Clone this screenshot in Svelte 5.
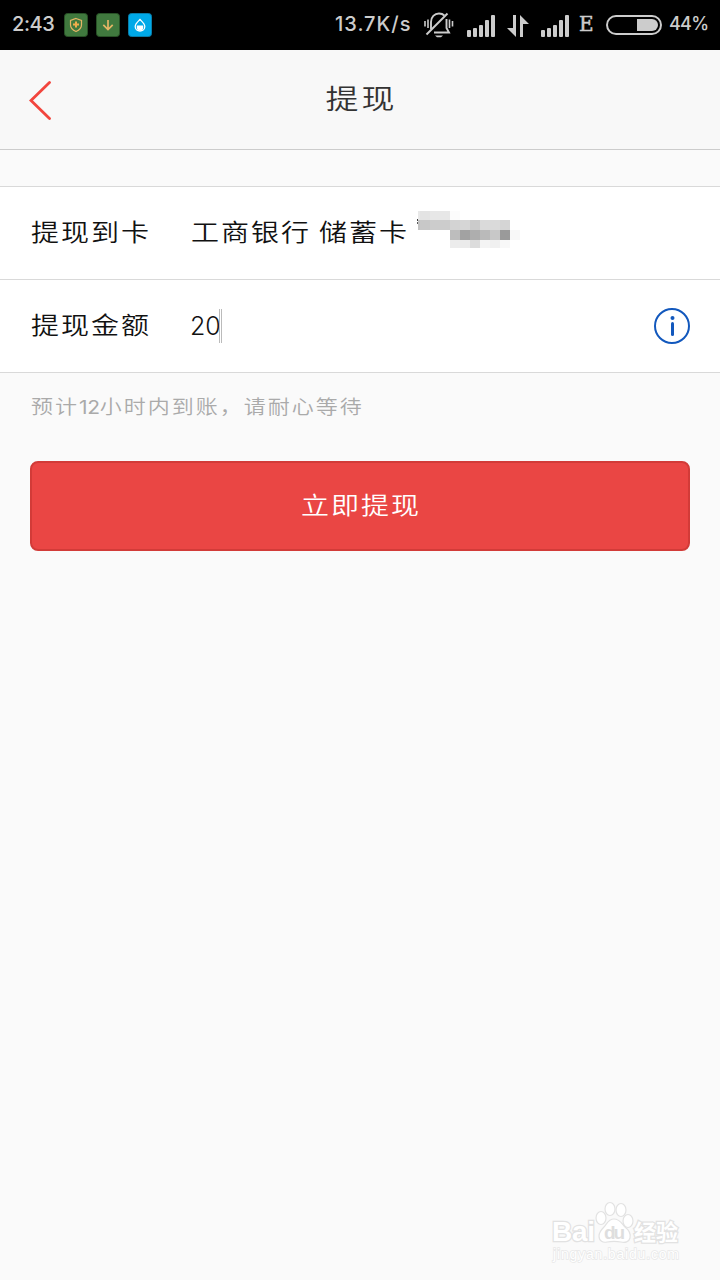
<script lang="ts">
  let amount = $state('20');

  const bars = [7, 9, 12, 17, 22];

  // blocks hiding the card number: x, y, width, height, grey level
  const mosaic = [
    [1, 0, 2, 9, 232], [3, 0, 10, 9, 227], [13, 0, 20, 9, 231], [33, 0, 10, 9, 252],
    [1, 9, 2, 10, 194], [3, 9, 10, 10, 200], [13, 9, 20, 10, 204], [33, 9, 10, 10, 211],
    [43, 9, 10, 10, 214], [53, 9, 10, 10, 203], [63, 9, 20, 10, 218], [83, 9, 10, 10, 213],
    [33, 19, 10, 10, 189], [43, 19, 10, 10, 162], [53, 19, 10, 10, 174], [63, 19, 10, 10, 186],
    [73, 19, 10, 10, 200], [83, 19, 10, 10, 154], [93, 19, 10, 10, 248],
    [33, 29, 10, 8, 236], [43, 29, 10, 8, 235], [53, 29, 10, 8, 220], [63, 29, 10, 8, 244],
    [73, 29, 10, 8, 240], [83, 29, 10, 8, 248],
    [0, 8, 1, 2, 60], [0, 11, 1, 2, 90]
  ];
</script>

{#snippet signal()}
  <svg class="signal" width="28" height="22" viewBox="0 0 28 22">
    {#each bars as h, i (i)}
      <rect x={i * 6} y={22 - h} width="4" height={h} rx="1" fill="#ccc" />
    {/each}
  </svg>
{/snippet}

<div class="screen">
  <div class="status">
    <span class="clock">2:43</span>
    <svg class="app" width="24" height="24" viewBox="0 0 24 24" fill="none">
      <rect x=".5" y=".5" width="23" height="23" rx="3" fill="#40793e" stroke="#285126" />
      <path d="M12 5.500 17.500 7.500V12c0 3.200-2.500 5.200-5.500 6.500C9 17.200 6.500 15.200 6.500 12V7.500Z" stroke="#e5b566" stroke-width="1.200" />
      <path d="M12 8.500v6M9 11.500h6" stroke="#f0ad4b" stroke-width="2" />
    </svg>
    <svg class="app" width="24" height="24" viewBox="0 0 24 24" fill="none">
      <rect x=".5" y=".5" width="23" height="23" rx="3" fill="#40793e" stroke="#285126" />
      <path d="M12 7v9.500M7.300 11.800 12 16.500l4.700-4.700" stroke="#e5b566" stroke-width="1.700" />
    </svg>
    <svg class="app" width="24" height="24" viewBox="0 0 24 24" fill="none">
      <rect x=".5" y=".5" width="23" height="23" rx="3" fill="#00a9e8" stroke="#087da9" />
      <path d="M12 6.500c2 2 4.800 4.200 4.800 7a4.800 4.500 0 0 1-9.600 0c0-2.800 2.800-5 4.800-7Z" stroke="#fff" stroke-width="1.300" />
      <path d="M8.800 12.500h6.400v2.500a3.200 2.500 0 0 1-6.400 0Z" fill="#fff" />
    </svg>
    <span class="speed">13.7K/s</span>
    <svg class="bell" width="30" height="26" viewBox="0 0 30 26" fill="none" stroke="#ccc" stroke-width="1.900">
      <path d="M7 17V10c0-5 3.500-8.500 8-8.500 2 0 4 .6 5.300 2M22.500 7v9l2.500 4.500H10" />
      <path d="M2.500 22.500 23.500 1.500" stroke-width="2" />
      <path d="M11 23.500h8l-2 1.700h-4Z" fill="#ccc" stroke="none" />
      <path d="M1 9v5.500M4 7.500V16M25.500 7.500V16M28.500 9v5.500" stroke-width="1.600" />
    </svg>
    {@render signal()}
    <svg class="arrows" width="22" height="22" viewBox="0 0 22 22" fill="#ccc">
      <path d="M6 0h3v22L0 13h6ZM13 0l9 9h-6v13h-3Z" />
    </svg>
    {@render signal()}
    <span class="edge">E</span>
    <svg class="battery" width="56" height="20" viewBox="0 0 56 20">
      <rect x="1" y="1" width="54" height="18" rx="9" fill="none" stroke="#ccc" stroke-width="2" />
      <path d="M31 4h15a6 6 0 0 1 0 12H31Z" fill="#ccc" />
    </svg>
    <span class="percent">44%</span>
  </div>

  <header>
    <button class="back" aria-label="返回">
      <svg width="22" height="40" viewBox="0 0 22 40" fill="none">
        <path d="M20.500 2.500 2 20.500 20.500 38.500" stroke="#f2453d" stroke-width="2.800" stroke-linecap="round" />
      </svg>
    </button>
    <h1>提现</h1>
  </header>

  <section class="form">
    <div class="row">
      <span class="label">提现到卡</span>
      <span class="value">工商银行<i></i>储蓄卡</span>
      <svg class="mosaic" width="103" height="37" viewBox="0 0 103 37" shape-rendering="crispEdges">
        {#each mosaic as [x, y, w, h, g], i (i)}
          <rect {x} {y} width={w} height={h} fill="rgb({g},{g},{g})" />
        {/each}
      </svg>
    </div>
    <div class="row">
      <span class="label">提现金额</span>
      <span class="amount">{amount}</span>
      <span class="caret"></span>
      <svg class="info" width="36" height="36" viewBox="0 0 36 36">
        <circle cx="18" cy="18" r="17" fill="none" stroke="#1258bd" stroke-width="2" />
        <circle cx="18.500" cy="10" r="2" fill="#1258bd" />
        <path d="M18.500 15.500v11" stroke="#1258bd" stroke-width="3" stroke-linecap="round" />
      </svg>
    </div>
  </section>

  <p class="hint">预计<b>12</b>小时内到账，请耐心等待</p>
  <button class="submit"><span>立即提现</span></button>

  <svg class="watermark" width="140" height="70" viewBox="0 0 140 70">
    <g fill="#fff" stroke="#e2e2e2" stroke-width="1.200">
      <g class="logo">
        <text x="2" y="41" font-size="28" textLength="43">Bai</text>
        <text x="84" y="40" font-size="22" textLength="44">经验</text>
      </g>
      <ellipse cx="51" cy="18" rx="5" ry="6.500" />
      <ellipse cx="60" cy="9" rx="5" ry="6.500" />
      <ellipse cx="71" cy="10" rx="5" ry="6.500" />
      <ellipse cx="78" cy="21" rx="5" ry="6.500" />
      <path d="M64 19c6 0 8 5 11 8 4 3 6 6 5 11-1 4-5 5-9 4-5-1-9-1-14 0-4 1-8-1-8-6 0-4 2-6 5-9 3-3 4-8 10-8Z" />
      <text class="du" x="54" y="39" font-size="19" textLength="21" fill="#dedede" stroke="none">du</text>
    </g>
    <text class="url" x="3" y="59" font-size="14" textLength="126">jingyan.baidu.com</text>
  </svg>
</div>

<style>
  :global(body) {
    margin: 0;
    background: #fafafa;
  }
  .screen {
    position: relative;
    width: 720px;
    height: 1280px;
    overflow: hidden;
    background: #fafafa;
    color: #111;
    font-family: "Noto Sans CJK SC", sans-serif;
    font-weight: 350;
  }
  svg {
    display: block;
    flex: none;
  }
  button {
    padding: 0;
    border: 0;
    background: none;
    font: inherit;
  }
  .status {
    display: flex;
    align-items: center;
    box-sizing: border-box;
    height: 50px;
    padding: 0 0 2px 12px;
    background: #000;
    color: #ccc;
    font: 500 20px/24px Inter, sans-serif;
    white-space: nowrap;
  }
  .clock {
    width: 52px;
    letter-spacing: -0.4px;
  }
  .app {
    margin: 2px 8px 0 0;
  }
  .speed {
    width: 89px;
    margin-left: 175px;
    letter-spacing: 1px;
  }
  .signal {
    margin: 3px 0 0 13px;
  }
  .bell {
    margin-top: 1px;
  }
  .arrows {
    margin: 3px 0 0 12px;
  }
  .arrows + :global(.signal) {
    margin-left: 12px;
  }
  .edge {
    width: 27px;
    margin-left: 10px;
    font: 400 20px/24px "DejaVu Serif", serif;
    -webkit-text-stroke: 0.5px #ccc;
  }
  .battery {
    margin-top: 2px;
  }
  .percent {
    margin-left: 7px;
    font-size: 18px;
    letter-spacing: -0.7px;
  }
  header {
    display: grid;
    grid-template-columns: 29px 1fr 30px;
    align-items: center;
    box-sizing: border-box;
    height: 100px;
    border-bottom: 1px solid #ccc;
    background: #f8f8f8;
  }
  .back {
    grid-column: 2;
    grid-row: 1;
    width: 22px;
  }
  h1 {
    grid-column: 2;
    grid-row: 1;
    justify-self: center;
    margin: 0;
    padding: 0 0 5px 4px;
    color: #333;
    font-size: 33px;
    font-weight: 350;
    line-height: 40px;
    letter-spacing: 3px;
    transform: scaleY(0.84);
  }
  .form {
    margin-top: 36px;
    border-top: 1px solid #d9d9d9;
    background: #fff;
  }
  .row {
    display: flex;
    align-items: center;
    height: 92px;
    padding: 0 30px 0 31px;
    border-bottom: 1px solid #d9d9d9;
    font-size: 28px;
    line-height: 36px;
    letter-spacing: 2px;
    white-space: nowrap;
  }
  .label,
  .value {
    padding-bottom: 4px;
    /* flat, clerical proportions */
    transform: scaleY(0.84);
  }
  .label {
    width: 160px;
  }
  .value {
    width: 226px;
  }
  .value i {
    display: inline-block;
    width: 8px;
  }
  .mosaic {
    margin-top: -7px;
  }
  .amount {
    margin-left: -1px;
    font-family: Inter, sans-serif;
    font-size: 25px;
    font-weight: 350;
    letter-spacing: -0.2px;
  }
  .caret {
    width: 1px;
    height: 34px;
    margin-left: -1px;
    border: solid #bbb;
    border-width: 0 1px;
  }
  .info {
    margin-left: auto;
  }
  .hint {
    margin: 18px 0 0 31px;
    color: #aaa;
    font-size: 22px;
    line-height: 28px;
    letter-spacing: 2px;
    transform: scaleY(0.88);
  }
  .hint b {
    font: 400 21px Inter, sans-serif;
    letter-spacing: -0.3px;
  }
  .submit {
    display: block;
    box-sizing: border-box;
    width: 660px;
    height: 90px;
    margin: 41px 30px 0;
    padding: 0 0 4px 2px;
    border: 2px solid #d23b38;
    border-radius: 8px;
    background: #ea4644;
    color: #fff;
    font-size: 28px;
    letter-spacing: 2px;
  }
  .submit span {
    display: inline-block;
    transform: scaleY(0.84);
  }
  .watermark {
    position: absolute;
    right: 30px;
    bottom: 10px;
  }
  .logo, .du {
    font-family: "Liberation Sans", "Noto Sans CJK SC", sans-serif;
    font-weight: 700;
  }
  .logo {
    paint-order: stroke;
    stroke-width: 2.5px;
  }
  .url {
    fill: #fff;
    stroke: #e8e8e8;
    stroke-width: 1.5px;
    paint-order: stroke;
    font-family: "Liberation Sans", sans-serif;
  }
</style>
